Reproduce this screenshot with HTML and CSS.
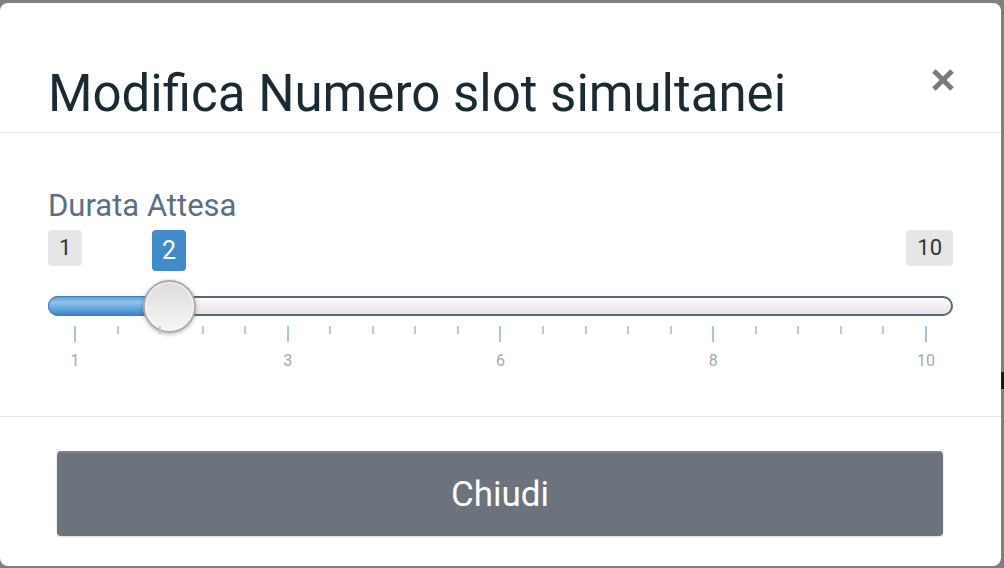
FILE: index.html
```html
<!DOCTYPE html>
<html lang="it">
<head>
  <meta charset="utf-8">
  <title>Modifica Numero slot simultanei</title>
  <link rel="stylesheet" href="styles.css">
</head>
<body>
  <div class="backdrop-edge"></div>

  <div class="modal">
    <!-- Intestazione -->
    <div class="modal-header">
      <h5 class="modal-title">Modifica Numero slot simultanei</h5>
      <button class="close" type="button" aria-label="Chiudi">
        <svg width="24" height="24" viewBox="0 0 24 24">
          <path d="M3 3 L21 21 M21 3 L3 21" stroke="#7a7a7a" stroke-width="5" fill="none"/>
        </svg>
      </button>
    </div>

    <!-- Corpo con lo slider -->
    <div class="modal-body">
      <label class="field-label">Durata Attesa</label>

      <div class="slider">
        <div class="slider-labels">
          <span class="badge">1</span>
          <span class="badge badge-from" style="left: 104px">2</span>
          <span class="badge">10</span>
        </div>

        <div class="slider-bar">
          <div class="track"></div>
          <div class="track-fill" style="width: 122px"></div>
          <div class="handle" style="left: 95px"></div>
        </div>

        <div class="slider-grid">
          <div class="grid-ticks">
            <span class="tick big"></span>
            <span class="tick"></span><span class="tick"></span><span class="tick"></span><span class="tick"></span>
            <span class="tick big"></span>
            <span class="tick"></span><span class="tick"></span><span class="tick"></span><span class="tick"></span>
            <span class="tick big"></span>
            <span class="tick"></span><span class="tick"></span><span class="tick"></span><span class="tick"></span>
            <span class="tick big"></span>
            <span class="tick"></span><span class="tick"></span><span class="tick"></span><span class="tick"></span>
            <span class="tick big"></span>
          </div>
          <div class="grid-labels">
            <span class="grid-label">1</span>
            <span class="grid-label">3</span>
            <span class="grid-label">6</span>
            <span class="grid-label">8</span>
            <span class="grid-label">10</span>
          </div>
        </div>
      </div>
    </div>

    <!-- Piede -->
    <div class="modal-footer">
      <button class="btn" type="button">Chiudi</button>
    </div>
  </div>
</body>
</html>
```

FILE: styles.css
```css
/* Modale sopra lo sfondo scuro */
body {
  margin: 0;
  padding: 0;
  background: #808080;
  font-family: Roboto, "Liberation Sans", sans-serif;
  color: #1a2a33;
  position: relative;
}
.backdrop-edge {
  position: absolute;
  left: 1001px;
  top: 372px;
  width: 3px;
  height: 17px;
  background: #1b1b1b;
}
.modal {
  margin: 3px 3px 0 0;
  background: #fff;
  border-radius: 8px;
}
.modal-header {
  display: flex;
  justify-content: space-between;
  padding: 61px 46px 8px 48px;
  border-bottom: 1px solid #e3e6ea;
}
.modal-title {
  margin: 0;
  font-size: 51px;
  font-weight: 400;
  line-height: 60px;
  color: #1a2a33;
}
.close {
  align-self: flex-start;
  margin-top: 4px;
  padding: 0;
  border: none;
  background: none;
  width: 24px;
  height: 24px;
  cursor: pointer;
}
.close svg {
  display: block;
}
.modal-body {
  padding: 55px 48px 46px;
}
.field-label {
  display: block;
  font-size: 31px;
  line-height: 36px;
  color: #5c6f82;
  margin-bottom: 6px;
}

/* Slider */
.slider-labels {
  position: relative;
  display: flex;
  justify-content: space-between;
  align-items: flex-start;
  height: 41px;
}
.badge {
  padding: 0 11px;
  height: 36px;
  line-height: 36px;
  font-size: 22px;
  color: #333;
  background: #e6e6e6;
  border-radius: 4px;
}
.badge-from {
  position: absolute;
  top: 0;
  height: 41px;
  line-height: 41px;
  padding: 0 10px;
  font-size: 25px;
  color: #fff;
  background: #428bca;
}
.slider-bar {
  position: relative;
  height: 20px;
  margin-top: 25px;
}
.track {
  height: 20px;
  box-sizing: border-box;
  border: 2px solid #56687b;
  border-radius: 10px;
  background: linear-gradient(to bottom, #fdfdfd, #e4e4e4);
}
.track-fill {
  position: absolute;
  left: 0;
  top: 0;
  height: 20px;
  box-sizing: border-box;
  border: 1px solid #3b7dc1;
  border-radius: 10px 0 0 10px;
  background: linear-gradient(to bottom, #5ea4dc, #8dc5ec 30%, #5da1da 70%, #3e84c7);
}
.handle {
  position: absolute;
  top: -16px;
  width: 53px;
  height: 53px;
  box-sizing: border-box;
  border-radius: 50%;
  border: 2px solid #ababab;
  background: linear-gradient(to bottom, #dcdcdc, #f6f6f6);
  box-shadow: 0 1px 4px rgba(0,0,0,0.3), inset 0 0 0 1px #fff;
}
.slider-grid {
  margin: 10px 26px 0 26px;
  height: 44px;
  position: relative;
}
.grid-ticks {
  display: flex;
  justify-content: space-between;
  align-items: flex-start;
}
.tick {
  width: 2px;
  height: 8px;
  background: #c6c6c6;
}
.tick.big {
  height: 16px;
  background: #a4c6e5;
}
.grid-labels {
  position: absolute;
  left: 0;
  right: 0;
  top: 25px;
  display: flex;
  justify-content: space-between;
}
.grid-label {
  width: 2px;
  display: flex;
  justify-content: center;
  font-size: 16px;
  line-height: 19px;
  color: #a0aab5;
}

/* Piede */
.modal-footer {
  border-top: 1px solid #e3e6ea;
  padding: 34px 58px 30px 57px;
}
.btn {
  display: block;
  width: 100%;
  height: 85px;
  padding: 3px 0 0;
  border: none;
  border-radius: 4px;
  background: #6c737d;
  color: #fff;
  font-family: Roboto, "Liberation Sans", sans-serif;
  font-size: 35px;
  line-height: 42px;
  box-shadow: inset 0 2px 0 rgba(255,255,255,0.12), 0 1px 2px rgba(0,0,0,0.15);
  cursor: pointer;
}
```
